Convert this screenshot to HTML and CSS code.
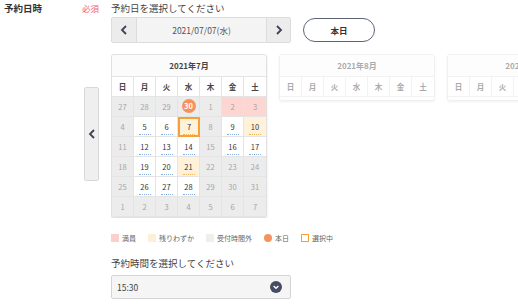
FILE: index.html
```html
<!DOCTYPE html>
<html lang="ja">
<head>
    <meta charset="UTF-8">
    <meta name="viewport" content="width=device-width, initial-scale=1.0">
    <title>予約日時</title>
    <link rel="stylesheet" href="styles.css">
</head>
<body>
    <div class="field">
        <div class="field-label">予約日時</div>
        <div class="field-req">必須</div>
        <div class="field-body">
            <div class="field-title">予約日を選択してください</div>
            <div class="date-row">
                <div class="date-nav">
                    <button class="nav-btn">
                        <svg width="8" height="10" viewBox="0 0 8 10"><polyline points="6,1 2,5 6,9" fill="none" stroke="#3e4352" stroke-width="1.8"/></svg>
                    </button>
                    <div class="nav-date">2021/07/07(水)</div>
                    <button class="nav-btn">
                        <svg width="8" height="10" viewBox="0 0 8 10"><polyline points="2,1 6,5 2,9" fill="none" stroke="#3e4352" stroke-width="1.8"/></svg>
                    </button>
                </div>
                <button class="today-btn">本日</button>
            </div>

            <div class="cal-area">
                <button class="month-prev">
                    <svg width="8" height="10" viewBox="0 0 8 10"><polyline points="6,1 2,5 6,9" fill="none" stroke="#3e4352" stroke-width="1.8"/></svg>
                </button>
                <div class="cal-list">
                    <div class="cal">
                        <div class="cal-head">2021年7月</div>
                        <div class="cal-grid">
                            <div class="wd">日</div><div class="wd">月</div><div class="wd">火</div><div class="wd">水</div><div class="wd">木</div><div class="wd">金</div><div class="wd">土</div>

                            <div class="day off">27</div>
                            <div class="day off">28</div>
                            <div class="day off">29</div>
                            <div class="day off"><span class="today">30</span></div>
                            <div class="day off">1</div>
                            <div class="day full">2</div>
                            <div class="day full">3</div>

                            <div class="day off">4</div>
                            <div class="day"><span class="num">5</span></div>
                            <div class="day"><span class="num">6</span></div>
                            <div class="day few sel"><span class="num">7</span></div>
                            <div class="day off">8</div>
                            <div class="day"><span class="num">9</span></div>
                            <div class="day few"><span class="num">10</span></div>

                            <div class="day off">11</div>
                            <div class="day"><span class="num">12</span></div>
                            <div class="day"><span class="num">13</span></div>
                            <div class="day"><span class="num">14</span></div>
                            <div class="day off">15</div>
                            <div class="day"><span class="num">16</span></div>
                            <div class="day"><span class="num">17</span></div>

                            <div class="day off">18</div>
                            <div class="day"><span class="num">19</span></div>
                            <div class="day"><span class="num">20</span></div>
                            <div class="day few"><span class="num">21</span></div>
                            <div class="day off">22</div>
                            <div class="day off">23</div>
                            <div class="day off">24</div>

                            <div class="day off">25</div>
                            <div class="day"><span class="num">26</span></div>
                            <div class="day"><span class="num">27</span></div>
                            <div class="day"><span class="num">28</span></div>
                            <div class="day off">29</div>
                            <div class="day off">30</div>
                            <div class="day off">31</div>

                            <div class="day off">1</div>
                            <div class="day off">2</div>
                            <div class="day off">3</div>
                            <div class="day off">4</div>
                            <div class="day off">5</div>
                            <div class="day off">6</div>
                            <div class="day off">7</div>
                        </div>
                    </div>

                    <div class="cal cal-faded">
                        <div class="cal-head">2021年8月</div>
                        <div class="cal-grid">
                            <div class="wd">日</div><div class="wd">月</div><div class="wd">火</div><div class="wd">水</div><div class="wd">木</div><div class="wd">金</div><div class="wd">土</div>
                        </div>
                    </div>

                    <div class="cal cal-faded">
                        <div class="cal-head">2021年9月</div>
                        <div class="cal-grid">
                            <div class="wd">日</div><div class="wd">月</div><div class="wd">火</div><div class="wd">水</div><div class="wd">木</div><div class="wd">金</div><div class="wd">土</div>
                        </div>
                    </div>
                </div>
            </div>

            <ul class="legend">
                <li><span class="mark mark-full"></span>満員</li>
                <li><span class="mark mark-few"></span>残りわずか</li>
                <li><span class="mark mark-off"></span>受付時間外</li>
                <li><span class="mark mark-today"></span>本日</li>
                <li><span class="mark mark-sel"></span>選択中</li>
            </ul>

            <div class="field-title time-title">予約時間を選択してください</div>
            <div class="time-select">
                <span>15:30</span>
                <span class="select-icon">
                    <svg width="12" height="12" viewBox="0 0 12 12"><circle cx="6" cy="6" r="6" fill="#464c63"/><polyline points="3.6,5 6,7.3 8.4,5" fill="none" stroke="#fff" stroke-width="1.4"/></svg>
                </span>
            </div>
        </div>
    </div>
</body>
</html>
```

FILE: styles.css
```css
body {
    margin: 0;
    padding: 0;
    font-family: "Noto Sans CJK JP", "Noto Sans", sans-serif;
    color: #333;
    background-color: #fff;
    overflow: hidden;
}

button {
    font-family: inherit;
    cursor: pointer;
}

.field {
    display: flex;
    padding-top: 1px;
}

.field-label {
    width: 78px;
    padding-left: 4px;
    font-size: 9.5px;
    font-weight: bold;
    line-height: 14px;
    color: #333;
}

.field-req {
    width: 29px;
    font-size: 8.5px;
    line-height: 14px;
    color: #ee6478;
}

.field-body {
    flex: 1;
    min-width: 0;
}

.field-title {
    font-size: 9.5px;
    line-height: 14px;
    color: #444;
}

/* date navigation */
.date-row {
    display: flex;
    align-items: center;
    margin-top: 2px;
}

.date-nav {
    display: flex;
    width: 180px;
    height: 26px;
    box-sizing: border-box;
    border: 1px solid #dcdcdc;
    border-radius: 2px;
    background-color: #f4f4f4;
}

.nav-btn {
    width: 25px;
    padding: 0;
    border: none;
    background-color: #ececec;
    display: flex;
    align-items: center;
    justify-content: center;
}

.nav-btn:first-child {
    border-right: 1px solid #dcdcdc;
}

.nav-btn:last-child {
    border-left: 1px solid #dcdcdc;
    width: 24px;
}

.nav-date {
    flex: 1;
    text-align: center;
    font-size: 8.5px;
    line-height: 24px;
    color: #555;
}

.today-btn {
    margin-left: 12px;
    width: 72px;
    height: 24px;
    padding: 0;
    border: 1.3px solid #5d6478;
    border-radius: 12px;
    background-color: #fff;
    font-size: 8.5px;
    font-weight: bold;
    color: #333;
}

/* calendars */
.cal-area {
    display: flex;
    align-items: flex-start;
    margin-top: 11px;
    margin-left: -27px;
}

.month-prev {
    flex: none;
    width: 15px;
    height: 94px;
    margin-top: 33px;
    margin-right: 12px;
    padding: 0;
    border: 1px solid #d8d8d8;
    border-radius: 2px;
    background-color: #efefef;
    display: flex;
    align-items: center;
    justify-content: center;
}

.cal-list {
    display: flex;
    align-items: flex-start;
    gap: 12px;
    overflow: hidden;
}

.cal {
    flex: none;
    border: 1px solid #e0e0e0;
    border-radius: 3px;
    background-color: #fff;
    box-shadow: 0 1px 2px rgba(0, 0, 0, 0.12);
    overflow: hidden;
}

.cal-faded {
    opacity: 0.45;
    padding-bottom: 3px;
}

.cal-head {
    height: 21px;
    line-height: 21px;
    text-align: center;
    font-size: 8px;
    font-weight: bold;
    color: #444;
    background-color: #fbfbfb;
    border-bottom: 1px solid #e4e4e4;
}

.cal-grid {
    display: grid;
    grid-template-columns: repeat(7, 22px);
    grid-auto-rows: 20px;
}

.wd,
.day {
    box-sizing: border-box;
    border-right: 1px solid #e4e4e4;
    border-bottom: 1px solid #e4e4e4;
    text-align: center;
    font-size: 7.5px;
    line-height: 19px;
}

.wd:nth-child(7n),
.day:nth-child(7n) {
    border-right: none;
}

.wd {
    color: #444;
    font-weight: bold;
    background-color: #fff;
}

.day {
    position: relative;
    color: #333;
    background-color: #fff;
}

.day .num {
    display: inline-block;
    width: 12px;
    line-height: 14px;
    margin-top: 2px;
    border-bottom: 1px dotted #8aaee2;
}

.day.off {
    color: #a5a5a5;
    background-color: #ececec;
}

.day.full {
    color: #a5a5a5;
    background-color: #fdd6d1;
}

.day.few {
    background-color: #fff2d8;
}

.day.few .num {
    border-bottom-color: #f2b660;
}

.day.sel {
    border: 2px solid #f4a13a;
    line-height: 16px;
}

.day.sel .num {
    margin-top: 0;
}

.today {
    display: inline-block;
    width: 14px;
    height: 14px;
    margin-top: 2px;
    border-radius: 50%;
    background-color: #f6935c;
    color: #fff;
    font-weight: bold;
    line-height: 14px;
    vertical-align: top;
}

/* legend */
.legend {
    display: flex;
    margin: 14px 0 0;
    padding: 0;
    list-style: none;
}

.legend li {
    display: flex;
    align-items: center;
    margin-right: 12px;
    font-size: 7px;
    line-height: 12px;
    color: #666;
}

.mark {
    display: inline-block;
    width: 8px;
    height: 8px;
    margin-right: 3px;
    box-sizing: border-box;
}

.mark-full {
    background-color: #fbcfca;
}

.mark-few {
    background-color: #fdf0d6;
}

.mark-off {
    background-color: #efefef;
}

.mark-today {
    border-radius: 50%;
    background-color: #f6935c;
}

.mark-sel {
    border: 1.5px solid #f4a13a;
}

/* time select */
.time-title {
    margin-top: 12px;
}

.time-select {
    display: flex;
    align-items: center;
    justify-content: space-between;
    width: 180px;
    height: 24px;
    margin-top: 5px;
    padding: 0 8px 0 5px;
    box-sizing: border-box;
    border: 1px solid #d4d4d4;
    border-radius: 2px;
    background-color: #f5f5f5;
    font-size: 8.5px;
    color: #444;
}

.select-icon {
    display: flex;
}
```
